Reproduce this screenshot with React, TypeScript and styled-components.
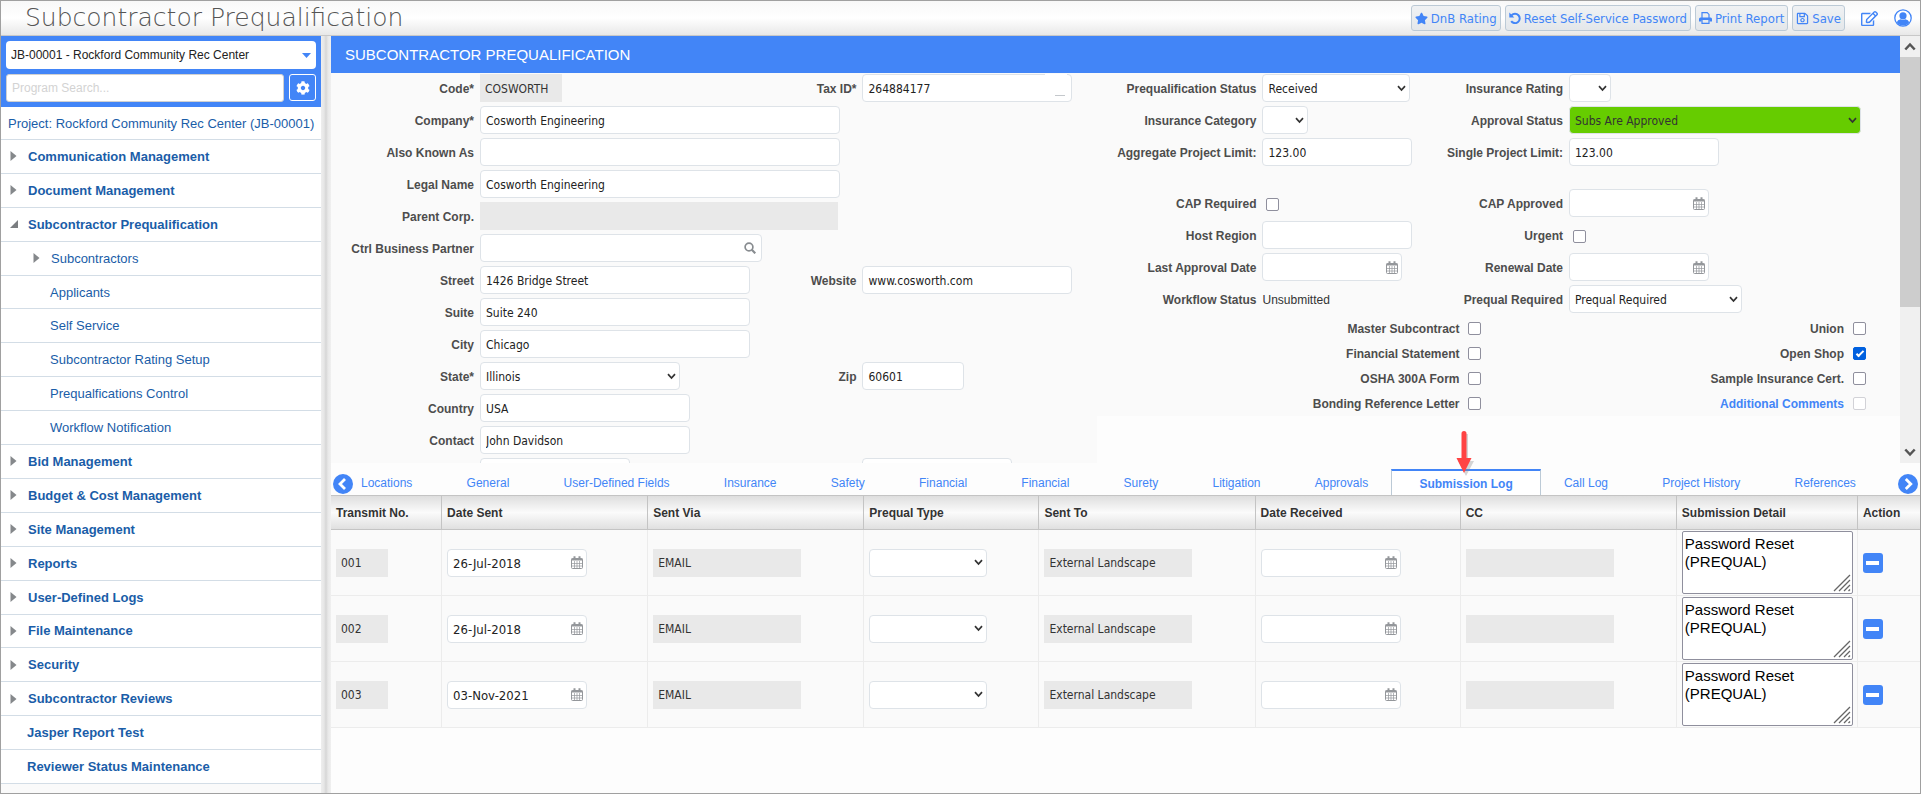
import React from 'react';
import styled, { createGlobalStyle, css } from 'styled-components';
import { FaStar, FaCog, FaRegEdit, FaRegSave } from 'react-icons/fa';

const sans = '"Liberation Sans", Arial, sans-serif';
const field = '"DejaVu Sans Condensed", "DejaVu Sans", Tahoma, sans-serif';
const blue = '#4285f7';

const Global = createGlobalStyle`
  *, *::before, *::after { box-sizing: border-box; }
  body { margin: 0; background: #fdfdfd; font-family: ${sans}; font-size: 12px; color: #333; }
  button, input, select, textarea { font: inherit; color: inherit; margin: 0; }
  a { text-decoration: none; }
  ul { list-style: none; margin: 0; padding: 0; }
`;

const Page = styled.div`
  display: flex;
  flex-direction: column;
  min-height: 100vh;
  border: 1px solid #a0a0a0;
`;

/* top bar */

const TopBar = styled.header`
  display: flex;
  align-items: center;
  justify-content: space-between;
  height: 35px;
  padding: 0 8px 0 24px;
  border-bottom: 1px solid #c8c8c8;
  background: linear-gradient(#f8f8f8, #fff 50%, #e8e8e8);
`;

const ProductTitle = styled.h1`
  margin: 0;
  font-family: "DejaVu Sans", sans-serif;
  font-weight: 200;
  font-size: 25px;
  line-height: 32px;
  color: #555;
  white-space: nowrap;
`;

const Actions = styled.div`
  display: flex;
  align-items: center;
  gap: 4px;
`;

const ActionButton = styled.button`
  display: flex;
  align-items: center;
  gap: 3px;
  height: 26px;
  padding: 0 3px;
  border: 1px solid #bccad6;
  border-radius: 3px;
  background: linear-gradient(#f0f2f4, #e4e7ea);
  color: ${blue};
  font-family: ${field};
  font-size: 13px;
  white-space: nowrap;
`;

const IconButton = styled.button`
  display: flex;
  padding: 0;
  margin-left: 12px;
  border: 0;
  background: none;
  color: ${blue};
`;

/* sidebar */

const Body = styled.div`
  display: flex;
  flex: 1;
`;

const Sidebar = styled.aside`
  display: flex;
  flex-direction: column;
  flex: 0 0 320px;
  padding-bottom: 9px;
  background: #fafafa;
`;

const Finder = styled.div`
  display: flex;
  flex-direction: column;
  gap: 5px;
  padding: 5px;
  background: ${blue};
`;

const FinderRow = styled.div`
  display: flex;
  gap: 5px;
`;

const SearchBox = styled.input`
  flex: 1;
  min-width: 0;
  height: 28px;
  padding: 0 5px;
  border: 1px solid #d0d0d0;
  border-radius: 3px;
  background: #fff;
  &::placeholder { color: #d3d3d3; opacity: 1; }
`;

const GearButton = styled.button`
  display: flex;
  align-items: center;
  justify-content: center;
  width: 27px;
  height: 27px;
  padding: 0;
  border: 1px solid #fff;
  border-radius: 3px;
  background: ${blue};
  color: #fff;
`;

const NavList = styled.ul`
  flex: 1;
  display: grid;
  grid-template-rows: 33px;
  grid-auto-rows: minmax(30px, 1fr);
  background: #fff;
`;

const NavItem = styled.li`
  display: flex;
  border-bottom: 1px solid #d3dde6;
`;

const NavLink = styled.a<{ $indent: number; $bold?: boolean }>`
  flex: 1;
  display: flex;
  align-items: center;
  padding-left: ${p => p.$indent}px;
  color: #1a5da8;
  font-size: 13px;
  font-weight: ${p => (p.$bold ? 700 : 400)};
  white-space: nowrap;
`;

const Twisty = styled.span`
  display: flex;
  width: 18px;
`;

const Splitter = styled.div`
  flex: 0 0 10px;
  background: linear-gradient(90deg, #eee, #e6e6e6 30%, #d6d6d6 50%, #e8e8e8 70%, #f0f0f0);
`;

/* form */

const Main = styled.main`
  flex: 1;
  min-width: 0;
`;

const ScrollPane = styled.section`
  display: flex;
  height: 427px;
`;

const PaneContent = styled.div`
  flex: 1;
  min-width: 0;
  overflow: hidden;
`;

const SectionTitle = styled.h2`
  margin: 0;
  padding-left: 14px;
  background: ${blue};
  color: #fff;
  font-size: 15px;
  font-weight: 400;
  line-height: 37px;
`;

const Columns = styled.div`
  display: flex;
  align-items: flex-start;
`;

const CompanyGrid = styled.div`
  flex: 766 1 0;
  display: grid;
  grid-template-columns: 143px 1fr 60px 235px;
  grid-auto-rows: 32px;
  column-gap: 6px;
  background: #fafafa;
`;

const StatusColumn = styled.div`
  flex: 802 1 0;
  background: #fafafa;
`;

const StatusGrid = styled.div<{ $gapAbove?: boolean }>`
  display: grid;
  grid-template-columns: 159px 1fr 120px 331px;
  grid-auto-rows: 32px;
  column-gap: 6px;
  margin-top: ${p => (p.$gapAbove ? 19 : 0)}px;
`;

const DocumentGrid = styled.div`
  display: grid;
  grid-template-columns: 362px 13px 1fr 13px;
  grid-auto-rows: 25px;
  align-items: center;
  column-gap: 9px;
  padding-right: 34px;
`;

const labelText = css`
  font-size: 12px;
  font-weight: 700;
  color: #4d4d4d;
  text-align: right;
  white-space: nowrap;
`;

const Label = styled.label`
  ${labelText}
  line-height: 32px;
`;

const LateLabel = styled(Label)`
  grid-column-start: 3;
`;

const DocLabel = styled.label`${labelText}`;

const DocLink = styled.a`
  ${labelText}
  color: ${blue};
`;

const Cell = styled.div<{ $span?: number }>`
  grid-column-end: span ${p => p.$span || 1};
  padding-top: 1px;
  min-width: 0;
`;

const CheckCell = styled(Cell)`
  display: flex;
  align-items: center;
  padding: 0 4px;
`;

const Plain = styled.span`
  font-size: 12px;
  line-height: 32px;
`;

const Holder = styled.div<{ $w: number }>`
  position: relative;
  width: ${p => p.$w}px;
  max-width: 100%;
`;

const Box = styled.input<{ $date?: boolean }>`
  display: block;
  width: 100%;
  height: 28px;
  padding: 1px 5px 0;
  border: 1px solid #dee3e8;
  border-radius: 4px;
  background: #fff;
  color: #222;
  font-family: ${field};
  font-size: ${p => (p.$date ? 13 : 12)}px;
  &:read-only {
    padding-left: 4px;
    border-color: #e9e9e9;
    border-radius: 0;
    background: #e9e9e9;
    color: #333;
  }
`;

const SelectBox = styled.select<{ $green?: boolean }>`
  display: block;
  appearance: none;
  width: 100%;
  height: 28px;
  padding: 1px 24px 0 5px;
  border: 1px solid #dee3e8;
  border-radius: 4px;
  background: ${p => (p.$green ? '#66cc00' : '#fff')};
  color: ${p => (p.$green ? '#333' : '#222')};
  font-family: ${field};
  font-size: 12px;
`;

const ProjectSelect = styled(SelectBox)`
  font-family: ${sans};
  padding: 0 24px 0 5px;
  border: 0;
`;

const Adornment = styled.span<{ $right: number }>`
  position: absolute;
  top: 0;
  bottom: 0;
  right: ${p => p.$right}px;
  display: flex;
  align-items: center;
  pointer-events: none;
`;

const MaskPatch = styled.span`
  position: absolute;
  top: 0;
  right: 5px;
  width: 22px;
  height: 22px;
  display: flex;
  align-items: flex-end;
  justify-content: flex-end;
  padding-right: 2px;
  background: #fff;
  &::after { content: ""; width: 10px; height: 1px; background: #c4c8cc; }
`;

const Check = styled.input`
  appearance: none;
  display: grid;
  place-items: center;
  width: 13px;
  height: 13px;
  border: 1px solid #8f8f9d;
  border-radius: 2px;
  background: #fff;
  &:checked { background: #0060df; border-color: #0060df; }
  &:checked::before {
    content: "";
    width: 4px;
    height: 8px;
    margin-bottom: 2px;
    border: solid #fff;
    border-width: 0 2px 2px 0;
    transform: rotate(45deg);
  }
  &:disabled { border-color: #d2d2d7; }
`;

/* scroll bar */

const ScrollBar = styled.div`
  flex: 0 0 20px;
  display: flex;
  flex-direction: column;
  background: #f0f0f0;
`;

const ScrollButton = styled.button`
  display: flex;
  align-items: center;
  justify-content: center;
  height: 21px;
  padding: 0;
  border: 0;
  background: #f0f0f0;
`;

const Track = styled.div`
  flex: 1;
`;

const Thumb = styled.div`
  height: 65%;
  background: #cdcdcd;
`;

/* tabs */

const TabBar = styled.div`
  display: flex;
  align-items: center;
  height: 32px;
  padding: 0 2px;
`;

const RoundButton = styled.button`
  display: flex;
  flex: none;
  margin-top: 10px;
  padding: 0;
  border: 0;
  background: none;
`;

const Tabs = styled.nav`
  flex: 1;
  display: flex;
  align-items: flex-end;
  justify-content: space-between;
  align-self: flex-end;
`;

const Tab = styled.a<{ $active?: boolean }>`
  position: relative;
  height: 26px;
  margin: 0 4px;
  padding: 2px 23px 0;
  color: ${blue};
  font-size: 12px;
  line-height: 24px;
  white-space: nowrap;
  &:first-child { padding-left: 4px; }
  &:last-child { padding-right: 38px; }
  ${p => p.$active && css`
    margin: 0 -4px;
    padding: 1px 27px 0;
    border: 1px solid #bccad6;
    border-top: 2px solid ${blue};
    border-bottom: 0;
    background: #fff;
    font-weight: 700;
  `}
`;

const Pointer = styled.svg`
  position: absolute;
  left: 50%;
  top: -42px;
  margin-left: -14px;
  overflow: visible;
`;

/* log table */

const LogTable = styled.table`
  width: 100%;
  table-layout: fixed;
  border-collapse: separate;
  border-spacing: 0;
`;

const HeadCell = styled.th<{ $w: number }>`
  width: ${p => p.$w}px;
  height: 35px;
  padding: 0 0 0 5px;
  border: solid #c4c4c4;
  border-width: 1px 1px 1px 0;
  background: linear-gradient(#dedede, #fbfbfb 50%, #e0e0e0);
  color: #333;
  font-size: 12px;
  text-align: left;
  white-space: nowrap;
  &:last-child { border-right: 0; }
`;

const DataCell = styled.td`
  height: 66px;
  padding: 1px 4px 1px 5px;
  border: solid #ececec;
  border-width: 0 1px 1px 0;
  background: #fafafa;
  vertical-align: middle;
  &:last-child { border-right: 0; }
`;

const Detail = styled.textarea`
  display: block;
  width: 100%;
  height: 63px;
  padding: 3px 2px;
  border: 1px solid #8f8f9d;
  border-radius: 2px;
  background: #fff;
  color: #000;
  font-size: 15px;
  line-height: 18px;
  resize: none;
`;

const Grip = styled.svg`
  position: absolute;
  right: 2px;
  bottom: 2px;
`;

const DetailHolder = styled.div`
  position: relative;
`;

const RemoveButton = styled.button`
  display: flex;
  align-items: center;
  justify-content: center;
  width: 20px;
  height: 20px;
  padding: 0;
  border: 0;
  border-radius: 3px;
  background: ${blue};
  &::before { content: ""; width: 13px; height: 4px; background: #fff; }
`;

/* drawings */

const Chevron = () => (
  <svg width="9" height="7" viewBox="0 0 9 7"><path d="M1 1.2 4.5 5 8 1.2" fill="none" stroke="#333" strokeWidth="1.7" /></svg>
);

const CalendarIcon = () => (
  <svg width="12" height="13" viewBox="0 0 12 13" fill="none" stroke="#94979b">
    <rect x=".5" y="2.5" width="11" height="10" rx="1" fill="#fff" />
    <path d="M.5 3.5h11" strokeWidth="2" />
    <path d="M3.500 5v7M6 5v7M8.500 5v7M1 7.500h10M1 10h10" strokeWidth=".7" />
    <path d="M3.500.3v3M8.500.3v3" strokeWidth="2" />
  </svg>
);

const SearchIcon = () => (
  <svg width="12" height="12" viewBox="0 0 12 12" fill="none" stroke="#888c90"><circle cx="5" cy="5" r="3.9" strokeWidth="1.7" /><path d="m7.8 7.8 3.5 3.5" strokeWidth="2.2" /></svg>
);

const UndoIcon = () => (
  <svg width="12" height="12" viewBox="0 0 12 12"><path d="M2.6 3.2A4.7 4.7 0 1 1 2.2 9.2" fill="none" stroke="currentColor" strokeWidth="2" /><path d="M.3.4v5h5z" fill="currentColor" /></svg>
);

const PrintIcon = () => (
  <svg width="13" height="12" viewBox="0 0 13 12" fill="none" stroke="currentColor">
    <path d="M3 6V.6h5.2L10 2.4V6" strokeWidth="1.2" />
    <path d="M0 9.5V7q0-1.5 1.5-1.5h10Q13 5.500 13 7v2.500h-2.500V8h-8v1.500z" fill="currentColor" stroke="none" />
    <path d="M3 8v3.400h7V8" strokeWidth="1.200" />
  </svg>
);

const UserIcon = () => (
  <svg width="18" height="18" viewBox="0 0 18 18">
    <circle cx="9" cy="9" r="8.200" fill="#fff" stroke="currentColor" strokeWidth="1.300" />
    <circle cx="9" cy="6.800" r="3.600" fill="currentColor" />
    <path d="M2.800 13.200q.8-2.600 3.800-2.900 2.400 1.500 4.800 0 3 .3 3.800 2.900A7.500 7.500 0 0 1 9 16.500a7.500 7.500 0 0 1-6.200-3.300z" fill="currentColor" />
  </svg>
);

const Closed = () => <svg width="7" height="10" viewBox="0 0 7 10"><path d="M.5 0 6.500 5 .5 10z" fill="#85888b" /></svg>;
const Open = () => <svg width="8" height="8" viewBox="0 0 8 8"><path d="M8 0v8H0z" fill="#7b7e81" /></svg>;

const ScrollArrow = ({ down }: { down?: boolean }) => (
  <svg width="12" height="9" viewBox="0 0 12 9"><path d={down ? 'M1.300 1.500 6 6.500l4.700-5' : 'M1.300 7.500 6 2.500l4.700 5'} fill="none" stroke="#555" strokeWidth="2.500" /></svg>
);

const Round = ({ next }: { next?: boolean }) => (
  <svg width="20" height="20" viewBox="0 0 20 20">
    <circle cx="10" cy="10" r="10" fill={blue} />
    <path d={next ? 'm7.800 5 5 5-5 5' : 'm12 5-5 5 5 5'} fill="none" stroke="#fff" strokeWidth="2.800" />
  </svg>
);

/* field helpers */

type FieldProps = { id?: string; name?: string; value?: string; w: number };

const Text = ({ id, name, value = '', w, locked, children }: FieldProps & { locked?: boolean; children?: React.ReactNode }) => (
  <Holder $w={w}><Box id={id} aria-label={name} defaultValue={value} readOnly={locked} />{children}</Holder>
);

const DateField = ({ id, name, value = '', w }: FieldProps) => (
  <Holder $w={w}><Box id={id} aria-label={name} $date defaultValue={value} /><Adornment $right={4}><CalendarIcon /></Adornment></Holder>
);

const Select = ({ id, name, value = '', w, green }: FieldProps & { green?: boolean }) => (
  <Holder $w={w}>
    <SelectBox id={id} aria-label={name} $green={green} defaultValue={value}><option>{value}</option></SelectBox>
    <Adornment $right={4}><Chevron /></Adornment>
  </Holder>
);

const nav: { text: string; state?: 'open' | 'closed'; child?: boolean }[] = [
  { text: 'Communication Management', state: 'closed' },
  { text: 'Document Management', state: 'closed' },
  { text: 'Subcontractor Prequalification', state: 'open' },
  { text: 'Subcontractors', state: 'closed', child: true },
  { text: 'Applicants', child: true },
  { text: 'Self Service', child: true },
  { text: 'Subcontractor Rating Setup', child: true },
  { text: 'Prequalfications Control', child: true },
  { text: 'Workflow Notification', child: true },
  { text: 'Bid Management', state: 'closed' },
  { text: 'Budget & Cost Management', state: 'closed' },
  { text: 'Site Management', state: 'closed' },
  { text: 'Reports', state: 'closed' },
  { text: 'User-Defined Logs', state: 'closed' },
  { text: 'File Maintenance', state: 'closed' },
  { text: 'Security', state: 'closed' },
  { text: 'Subcontractor Reviews', state: 'closed' },
  { text: 'Jasper Report Test' },
  { text: 'Reviewer Status Maintenance' },
];

const indentOf = (child?: boolean, arrow?: boolean) => (child ? (arrow ? 32 : 49) : arrow ? 9 : 26);

const tabs = ['Locations', 'General', 'User-Defined Fields', 'Insurance', 'Safety', 'Financial', 'Financial', 'Surety', 'Litigation', 'Approvals', 'Submission Log', 'Call Log', 'Project History', 'References'];

const headings: [string, number][] = [['Transmit No.', 111], ['Date Sent', 206], ['Sent Via', 216], ['Prequal Type', 175], ['Sent To', 216], ['Date Received', 205], ['CC', 216], ['Submission Detail', 181], ['Action', 62]];

const log = [['001', '26-Jul-2018'], ['002', '26-Jul-2018'], ['003', '03-Nov-2021']];

const documents = [
  ['Master Subcontract', 'Union'],
  ['Financial Statement', 'Open Shop'],
  ['OSHA 300A Form', 'Sample Insurance Cert.'],
  ['Bonding Reference Letter', 'Additional Comments'],
];

const idOf = (text: string) => text.toLowerCase().replace(/[^a-z0-9]+/g, '-');

export default function App() {
  return (
    <Page>
      <Global />
      <TopBar>
        <ProductTitle>Subcontractor Prequalification</ProductTitle>
        <Actions>
          <ActionButton><FaStar size={13} />DnB Rating</ActionButton>
          <ActionButton><UndoIcon />Reset Self-Service Password</ActionButton>
          <ActionButton><PrintIcon />Print Report</ActionButton>
          <ActionButton><FaRegSave size={13} />Save</ActionButton>
          <IconButton aria-label="Edit"><FaRegEdit size={17} /></IconButton>
          <IconButton aria-label="Account"><UserIcon /></IconButton>
        </Actions>
      </TopBar>
      <Body>
        <Sidebar>
          <Finder>
            <Holder $w={310}>
              <ProjectSelect aria-label="Project" defaultValue="JB-00001 - Rockford Community Rec Center">
                <option>JB-00001 - Rockford Community Rec Center</option>
              </ProjectSelect>
              <Adornment $right={5}><svg width="9" height="5" viewBox="0 0 9 5"><path d="M0 0h9L4.500 5z" fill={blue} /></svg></Adornment>
            </Holder>
            <FinderRow>
              <SearchBox aria-label="Program search" placeholder="Program Search..." />
              <GearButton aria-label="Settings"><FaCog size={14} /></GearButton>
            </FinderRow>
          </Finder>
          <NavList>
            <NavItem><NavLink href="#" $indent={7}>Project: Rockford Community Rec Center (JB-00001)</NavLink></NavItem>
            {nav.map(item => (
              <NavItem key={item.text}>
                <NavLink href="#" $bold={!item.child} $indent={indentOf(item.child, !!item.state)}>
                  {item.state && <Twisty>{item.state === 'open' ? <Open /> : <Closed />}</Twisty>}
                  {item.text}
                </NavLink>
              </NavItem>
            ))}
          </NavList>
        </Sidebar>
        <Splitter />
        <Main>
          <ScrollPane>
            <PaneContent>
              <SectionTitle>SUBCONTRACTOR PREQUALIFICATION</SectionTitle>
              <Columns>
                <CompanyGrid>
                  <Label htmlFor="code">Code*</Label>
                  <Cell><Text id="code" w={82} value="COSWORTH" locked /></Cell>
                  <LateLabel htmlFor="tax">Tax ID*</LateLabel>
                  <Cell><Text id="tax" w={210} value="264884177"><MaskPatch /></Text></Cell>
                  <Label htmlFor="company">Company*</Label>
                  <Cell $span={3}><Text id="company" w={360} value="Cosworth Engineering" /></Cell>
                  <Label htmlFor="aka">Also Known As</Label>
                  <Cell $span={3}><Text id="aka" w={360} /></Cell>
                  <Label htmlFor="legal">Legal Name</Label>
                  <Cell $span={3}><Text id="legal" w={360} value="Cosworth Engineering" /></Cell>
                  <Label htmlFor="parent">Parent Corp.</Label>
                  <Cell $span={3}><Text id="parent" w={358} locked /></Cell>
                  <Label htmlFor="partner">Ctrl Business Partner</Label>
                  <Cell $span={3}><Text id="partner" w={282}><Adornment $right={6}><SearchIcon /></Adornment></Text></Cell>
                  <Label htmlFor="street">Street</Label>
                  <Cell><Text id="street" w={270} value="1426 Bridge Street" /></Cell>
                  <LateLabel htmlFor="website">Website</LateLabel>
                  <Cell><Text id="website" w={210} value="www.cosworth.com" /></Cell>
                  <Label htmlFor="suite">Suite</Label>
                  <Cell $span={3}><Text id="suite" w={270} value="Suite 240" /></Cell>
                  <Label htmlFor="city">City</Label>
                  <Cell $span={3}><Text id="city" w={270} value="Chicago" /></Cell>
                  <Label htmlFor="state">State*</Label>
                  <Cell><Select id="state" w={200} value="Illinois" /></Cell>
                  <LateLabel htmlFor="zip">Zip</LateLabel>
                  <Cell><Text id="zip" w={102} value="60601" /></Cell>
                  <Label htmlFor="country">Country</Label>
                  <Cell $span={3}><Text id="country" w={210} value="USA" /></Cell>
                  <Label htmlFor="contact">Contact</Label>
                  <Cell $span={3}><Text id="contact" w={210} value="John Davidson" /></Cell>
                  <span />
                  <Cell><Text name="Phone" w={150} /></Cell>
                  <span />
                  <Cell><Text name="Fax" w={150} /></Cell>
                </CompanyGrid>
                <StatusColumn>
                  <StatusGrid>
                    <Label htmlFor="status">Prequalification Status</Label>
                    <Cell><Select id="status" w={148} value="Received" /></Cell>
                    <Label htmlFor="rating">Insurance Rating</Label>
                    <Cell><Select id="rating" w={42} /></Cell>
                    <Label htmlFor="category">Insurance Category</Label>
                    <Cell><Select id="category" w={46} /></Cell>
                    <Label htmlFor="approval">Approval Status</Label>
                    <Cell><Select id="approval" w={292} value="Subs Are Approved" green /></Cell>
                    <Label htmlFor="aggregate">Aggregate Project Limit:</Label>
                    <Cell><Text id="aggregate" w={150} value="123.00" /></Cell>
                    <Label htmlFor="single">Single Project Limit:</Label>
                    <Cell><Text id="single" w={150} value="123.00" /></Cell>
                  </StatusGrid>
                  <StatusGrid $gapAbove>
                    <Label htmlFor="capreq">CAP Required</Label>
                    <CheckCell><Check type="checkbox" id="capreq" /></CheckCell>
                    <Label htmlFor="capapp">CAP Approved</Label>
                    <Cell><DateField id="capapp" w={140} /></Cell>
                    <Label htmlFor="region">Host Region</Label>
                    <Cell><Text id="region" w={150} /></Cell>
                    <Label htmlFor="urgent">Urgent</Label>
                    <CheckCell><Check type="checkbox" id="urgent" /></CheckCell>
                    <Label htmlFor="lastapp">Last Approval Date</Label>
                    <Cell><DateField id="lastapp" w={140} /></Cell>
                    <Label htmlFor="renewal">Renewal Date</Label>
                    <Cell><DateField id="renewal" w={140} /></Cell>
                    <Label as="span">Workflow Status</Label>
                    <Plain>Unsubmitted</Plain>
                    <Label htmlFor="required">Prequal Required</Label>
                    <Cell><Select id="required" w={173} value="Prequal Required" /></Cell>
                  </StatusGrid>
                  <DocumentGrid>
                    {documents.map(([left, right]) => {
                      const linked = right === 'Additional Comments';
                      return (
                        <React.Fragment key={left}>
                          <DocLabel htmlFor={idOf(left)}>{left}</DocLabel>
                          <Check type="checkbox" id={idOf(left)} />
                          {linked ? <DocLink href="#">{right}</DocLink> : <DocLabel htmlFor={idOf(right)}>{right}</DocLabel>}
                          <Check type="checkbox" id={idOf(right)} aria-label={right} disabled={linked} defaultChecked={right === 'Open Shop'} />
                        </React.Fragment>
                      );
                    })}
                  </DocumentGrid>
                </StatusColumn>
              </Columns>
            </PaneContent>
            <ScrollBar>
              <ScrollButton aria-label="Scroll up"><ScrollArrow /></ScrollButton>
              <Track><Thumb /></Track>
              <ScrollButton aria-label="Scroll down"><ScrollArrow down /></ScrollButton>
            </ScrollBar>
          </ScrollPane>
          <TabBar>
            <RoundButton aria-label="Previous tabs"><Round /></RoundButton>
            <Tabs>
              {tabs.map((name, i) => {
                const active = name === 'Submission Log';
                return (
                  <Tab key={i} href="#" $active={active}>
                    {name}
                    {active && (
                      <Pointer width="24" height="46" viewBox="0 0 24 46">
                        <path d="M11 5h5v27h6l-8 15-8-15h5z" fill="#888" opacity=".35" />
                        <path d="M9.500 4.500a2.500 2.500 0 0 1 5 0V29H19.500L12 44 4.500 29h5z" fill="#ff4343" />
                      </Pointer>
                    )}
                  </Tab>
                );
              })}
            </Tabs>
            <RoundButton aria-label="Next tabs"><Round next /></RoundButton>
          </TabBar>
          <LogTable>
            <thead>
              <tr>{headings.map(([text, w]) => <HeadCell key={text} $w={w}>{text}</HeadCell>)}</tr>
            </thead>
            <tbody>
              {log.map(([no, sent]) => (
                <tr key={no}>
                  <DataCell><Text name="Transmit No." w={52} value={no} locked /></DataCell>
                  <DataCell><DateField name="Date Sent" w={140} value={sent} /></DataCell>
                  <DataCell><Text name="Sent Via" w={148} value="EMAIL" locked /></DataCell>
                  <DataCell><Select name="Prequal Type" w={118} /></DataCell>
                  <DataCell><Text name="Sent To" w={148} value="External Landscape" locked /></DataCell>
                  <DataCell><DateField name="Date Received" w={140} /></DataCell>
                  <DataCell><Text name="CC" w={148} locked /></DataCell>
                  <DataCell>
                    <DetailHolder>
                      <Detail aria-label="Submission Detail" defaultValue={'Password Reset\n(PREQUAL)'} />
                      <Grip width="18" height="18" viewBox="0 0 18 18"><path d="M1 17 17 1M6 17 17 6M11 17l6-6M15.500 17l1.500-1.500" stroke="#666" strokeWidth="1.300" /></Grip>
                    </DetailHolder>
                  </DataCell>
                  <DataCell><RemoveButton aria-label="Remove row" /></DataCell>
                </tr>
              ))}
            </tbody>
          </LogTable>
        </Main>
      </Body>
    </Page>
  );
}
